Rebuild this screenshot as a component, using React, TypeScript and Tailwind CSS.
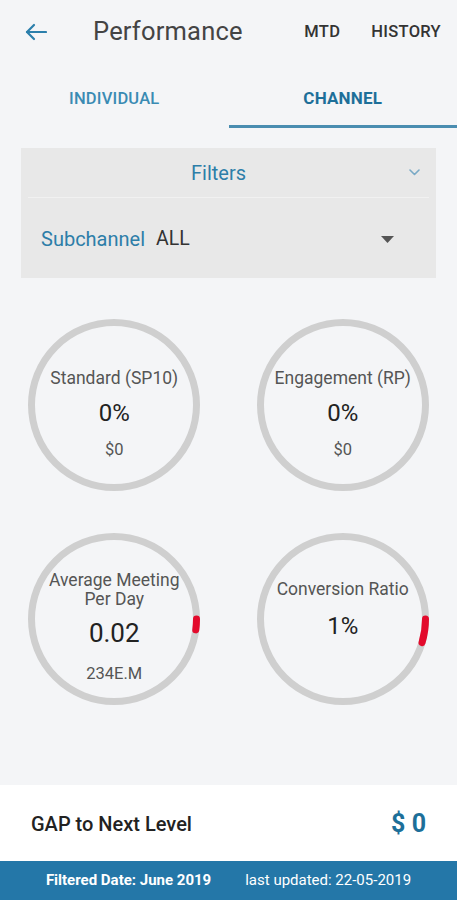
import React from "react";

const FONT = { fontFamily: "Roboto, 'Noto Sans', Arial, sans-serif" };

function Ring({ arc }: { arc?: number }) {
  return (
    <svg className="absolute inset-0" width="172" height="172" viewBox="0 0 172 172">
      <circle cx="86" cy="86" r="82.5" fill="none" stroke="#cfcfcf" strokeWidth="7" />
      {arc ? (
        <circle
          cx="86"
          cy="86"
          r="82.5"
          fill="none"
          stroke="#e30a2c"
          strokeWidth="7"
          strokeLinecap="round"
          strokeDasharray={`${arc} 1000`}
        />
      ) : null}
    </svg>
  );
}

export default function App() {
  return (
    <div className="w-[457px] h-[900px] bg-[#f4f5f7] flex flex-col overflow-hidden" style={FONT}>
      {/* Header */}
      <div className="h-[64px] flex items-center pl-[25px] pr-[16px]">
        <svg width="22" height="18" viewBox="0 0 22 18" fill="none" stroke="#2b7fab" strokeWidth="2.2" strokeLinecap="round" strokeLinejoin="round">
          <path d="M21 9H2" />
          <path d="M9 2L2 9l7 7" />
        </svg>
        <div className="ml-[46px] text-[25.5px] leading-none text-[#444444] tracking-[0.2px]">Performance</div>
        <div className="ml-auto flex items-center gap-[31px] text-[16.5px] font-medium text-[#333333] tracking-[0.3px]">
          <span>MTD</span>
          <span>HISTORY</span>
        </div>
      </div>

      {/* Tabs */}
      <div className="h-[64px] flex">
        <div className="flex-1 flex items-center justify-center pt-[9px] border-b-[3px] border-transparent text-[16.5px] font-medium text-[#3a8bb3] tracking-[0.2px]">
          INDIVIDUAL
        </div>
        <div className="flex-1 flex items-center justify-center pt-[9px] border-b-[3px] border-[#4a8db0] text-[17px] font-bold text-[#1d6f99] tracking-[0.2px]">
          CHANNEL
        </div>
      </div>

      {/* Filters */}
      <div className="mx-[21px] mt-[20px] bg-[#e8e8e8] flex flex-col">
        <div className="h-[49px] relative flex items-center justify-center pr-[20px]">
          <span className="text-[20px] text-[#2d7ea8]">Filters</span>
          <svg className="absolute right-[16px] top-[21px]" width="11" height="7" viewBox="0 0 11 7" fill="none" stroke="#7aaac6" strokeWidth="1.6" strokeLinecap="round" strokeLinejoin="round">
            <path d="M1 1l4.5 4.5L10 1" />
          </svg>
        </div>
        <div className="mx-[7px] h-px bg-[#f1f1f1]" />
        <div className="h-[80px] flex items-center pl-[20px] pr-[42px] pt-[2px]">
          <span className="text-[20px] text-[#2d7ea8]">Subchannel</span>
          <span className="ml-[11px] text-[19.5px] text-[#333333]">ALL</span>
          <svg className="ml-auto" width="13" height="7" viewBox="0 0 13 7">
            <path d="M0 0h13L6.5 7z" fill="#555555" />
          </svg>
        </div>
      </div>

      {/* Circles */}
      <div className="grid grid-cols-2 gap-y-[42px] mt-[41px]">
        <div className="flex justify-center">
          <div className="relative w-[172px] h-[172px] flex flex-col items-center text-center pt-[48px]">
            <Ring />
            <div className="text-[17.5px] leading-[22px] text-[#555555] whitespace-nowrap">Standard (SP10)</div>
            <div className="mt-[9px] text-[24px] leading-[30px] text-[#222222]">0%</div>
            <div className="mt-[11px] text-[16.5px] leading-[22px] text-[#555555]">$0</div>
          </div>
        </div>
        <div className="flex justify-center">
          <div className="relative w-[172px] h-[172px] flex flex-col items-center text-center pt-[48px]">
            <Ring />
            <div className="text-[17.5px] leading-[22px] text-[#555555] whitespace-nowrap">Engagement (RP)</div>
            <div className="mt-[9px] text-[24px] leading-[30px] text-[#222222]">0%</div>
            <div className="mt-[11px] text-[16.5px] leading-[22px] text-[#555555]">$0</div>
          </div>
        </div>
        <div className="flex justify-center">
          <div className="relative w-[172px] h-[172px] flex flex-col items-center text-center pt-[38px]">
            <Ring arc={11} />
            <div className="text-[17.5px] leading-[19px] text-[#555555] whitespace-nowrap">
              Average Meeting
              <br />
              Per Day
            </div>
            <div className="mt-[8px] text-[26px] leading-[32px] text-[#222222]">0.02</div>
            <div className="mt-[14px] text-[16.5px] leading-[22px] text-[#555555]">234E.M</div>
          </div>
        </div>
        <div className="flex justify-center">
          <div className="relative w-[172px] h-[172px] flex flex-col items-center text-center pt-[45px]">
            <Ring arc={24} />
            <div className="text-[17.5px] leading-[22px] text-[#555555] whitespace-nowrap">Conversion Ratio</div>
            <div className="mt-[11px] text-[24px] leading-[30px] text-[#222222]">1%</div>
          </div>
        </div>
      </div>

      <div className="flex-1" />

      {/* GAP */}
      <div className="h-[76px] bg-white flex items-center justify-between pl-[31px] pr-[31px] pt-[2px]">
        <span className="text-[20px] font-medium text-[#222222]">GAP to Next Level</span>
        <span className="text-[25px] font-bold text-[#1d6f99]">$ 0</span>
      </div>

      {/* Footer */}
      <div className="h-[39px] bg-[#2477a8] flex items-center justify-center gap-[34px] text-[15px] text-white">
        <span className="font-bold">Filtered Date: June 2019</span>
        <span>last updated: 22-05-2019</span>
      </div>
    </div>
  );
}
